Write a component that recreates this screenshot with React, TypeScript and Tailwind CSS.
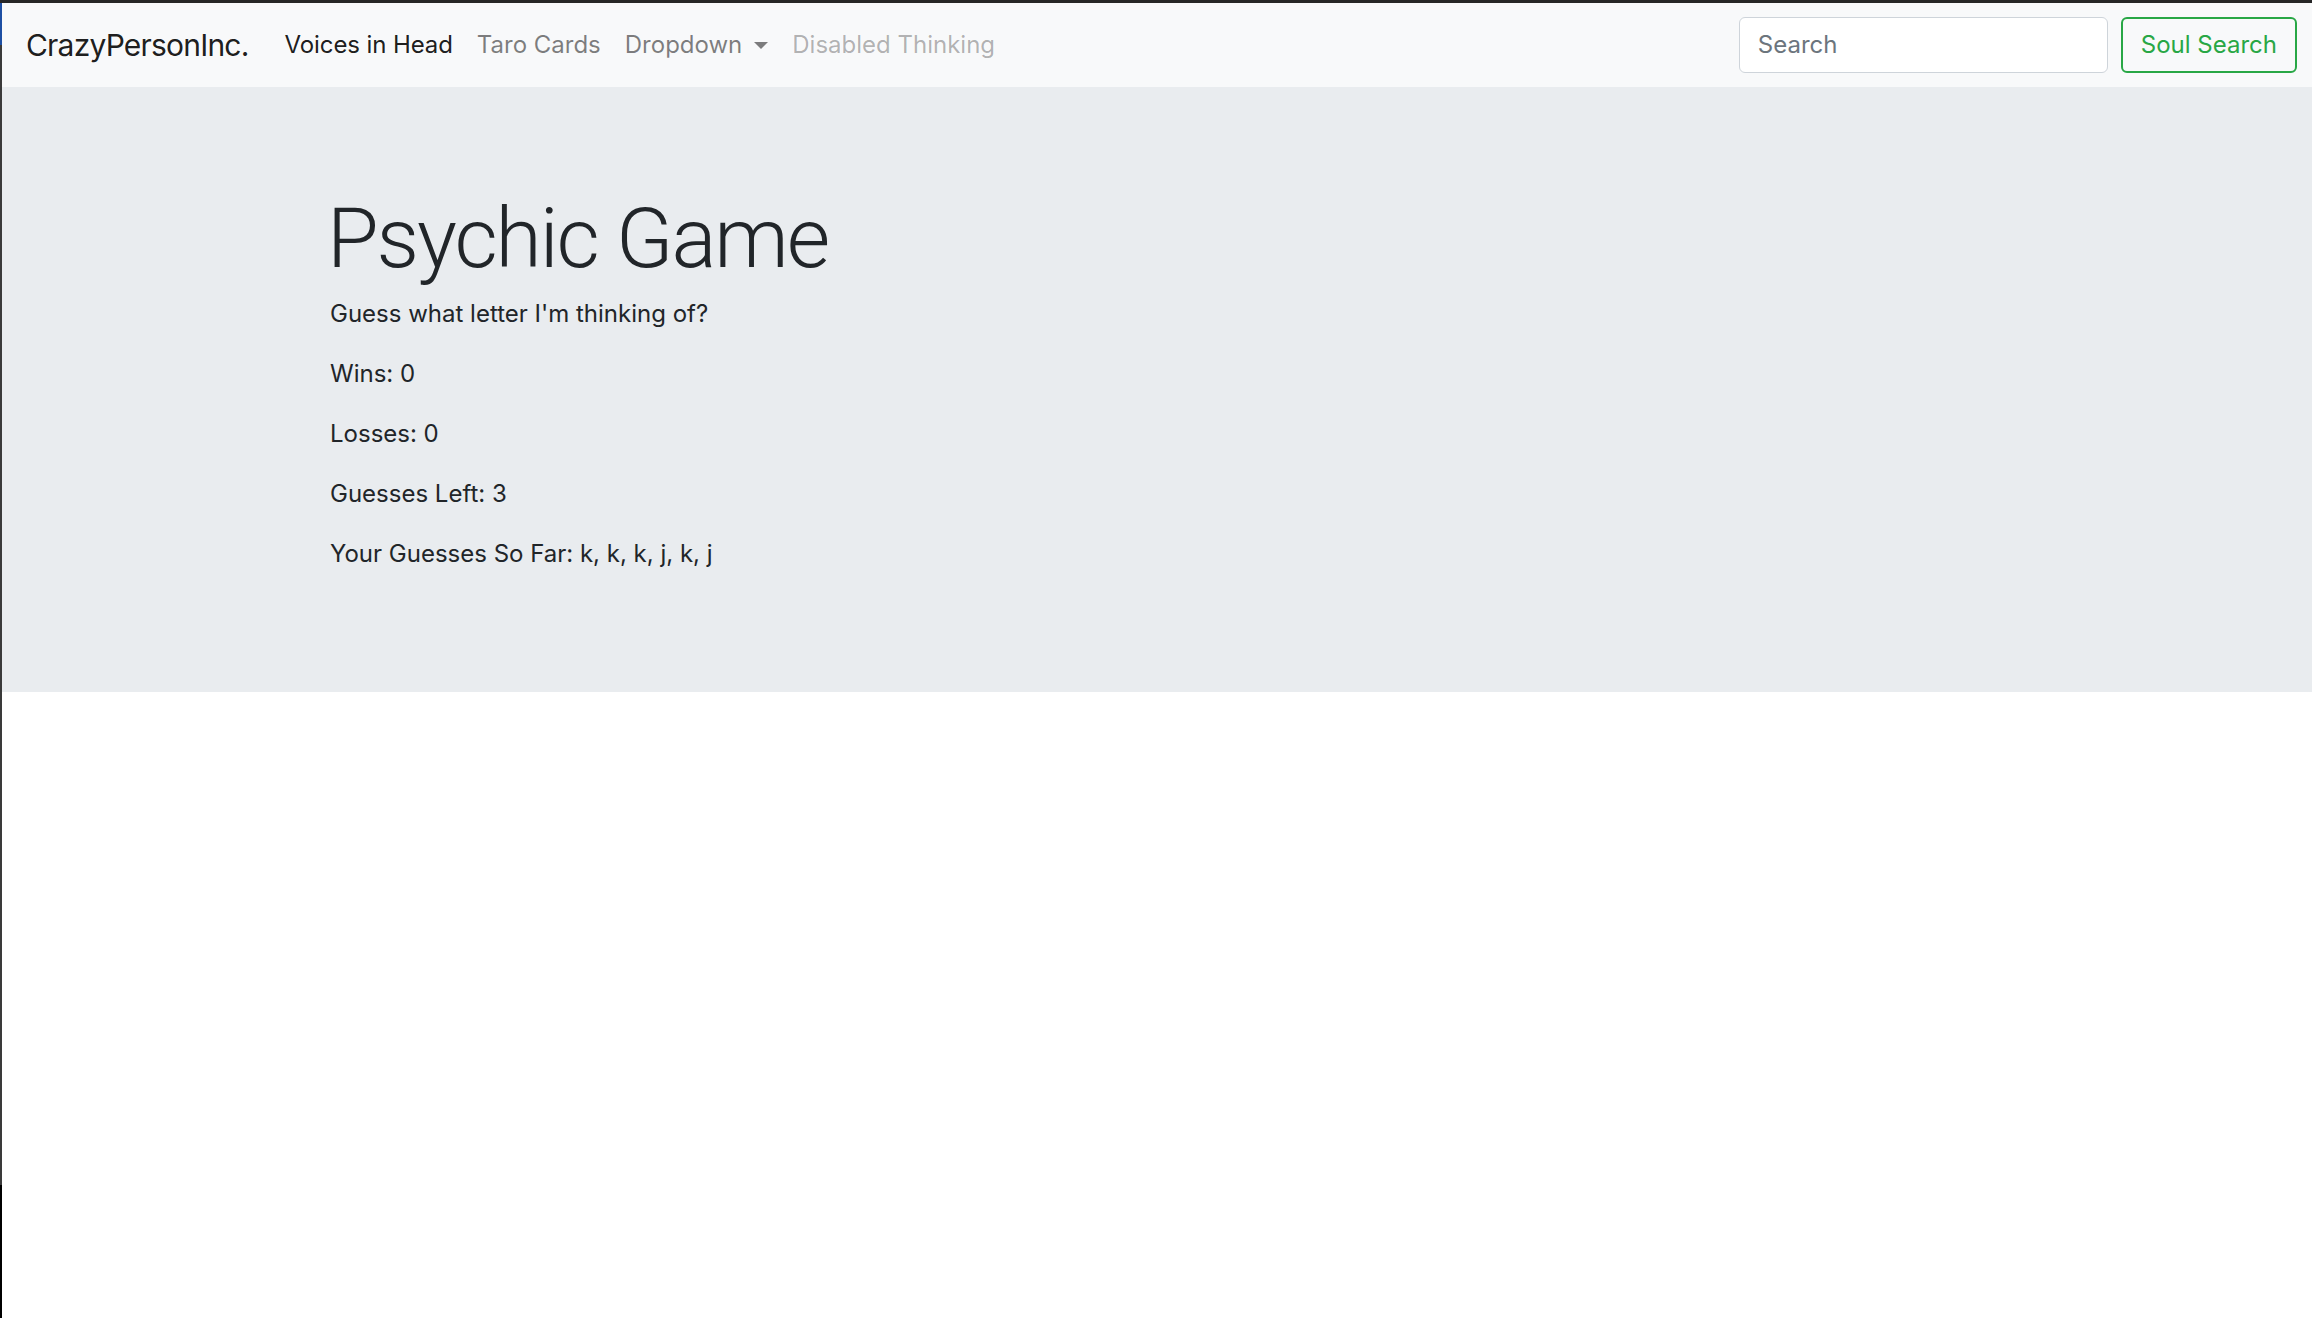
import React from "react";

export default function App() {
  const font = { fontFamily: 'Inter, "Noto Sans", "Liberation Sans", sans-serif' };
  return (
    <div className="flex flex-col h-[1318px] w-full bg-white text-[#212529] overflow-hidden" style={font}>
      <div className="h-[3px] w-full bg-[#262626] shrink-0" />
      <div className="flex flex-1 min-h-0">
        <div className="w-[2px] shrink-0 flex flex-col">
          <div className="h-[42px] bg-[#1d4fa3]" />
          <div className="flex-1 bg-[#3a3a3a]" />
          <div className="h-[133px] bg-black" />
        </div>
        <div className="flex-1 flex flex-col min-w-0">
          <nav className="h-[84px] shrink-0 bg-[#f8f9fa] flex items-center pl-6 pr-[15px]">
            <span className="text-[30px] leading-[45px] text-black/90 mr-6 tracking-[-0.8px]">CrazyPersonInc.</span>
            <div className="flex items-center text-[24px] leading-[36px]">
              <span className="px-3 text-black/90 tracking-[-0.1px]">Voices in Head</span>
              <span className="px-3 text-black/50">Taro Cards</span>
              <span className="px-3 text-black/50 flex items-center">
                Dropdown
                <span className="inline-block ml-[12px] w-0 h-0 border-t-[7px] border-t-black/50 border-x-[7px] border-x-transparent" />
              </span>
              <span className="px-3 text-black/30">Disabled Thinking</span>
            </div>
            <div className="ml-auto flex items-center gap-[13px]">
              <div className="w-[369px] h-[56px] bg-white border-[1.5px] border-[#ced4da] rounded-[6px] flex items-center px-[18px] text-[24px] text-[#6c757d]">
                Search
              </div>
              <button className="h-[56px] px-[18px] border-2 border-[#28a745] text-[#28a745] rounded-[6px] text-[24px] leading-[36px] bg-transparent">
                Soul Search
              </button>
            </div>
          </nav>
          <section className="bg-[#e9ecef] pt-[96px] pb-[120px] shrink-0">
            <div className="mx-auto max-w-[1710px] pl-[28px] pr-[22px]">
              <h1
                className="text-[84px] leading-[101px] font-light pt-[5px] mb-[7px] tracking-[-2.1px] -ml-[3px]"
                style={{ fontFamily: 'Roboto, Inter, "Liberation Sans", sans-serif' }}
              >
                Psychic Game
              </h1>
              <div className="text-[24px] leading-[36px] flex flex-col gap-[24px]">
                <p>Guess what letter I'm thinking of?</p>
                <p>Wins: 0</p>
                <p>Losses: 0</p>
                <p>Guesses Left: 3</p>
                <p>Your Guesses So Far: k, k, k, j, k, j</p>
              </div>
            </div>
          </section>
          <div className="flex-1 bg-white" />
        </div>
      </div>
    </div>
  );
}
